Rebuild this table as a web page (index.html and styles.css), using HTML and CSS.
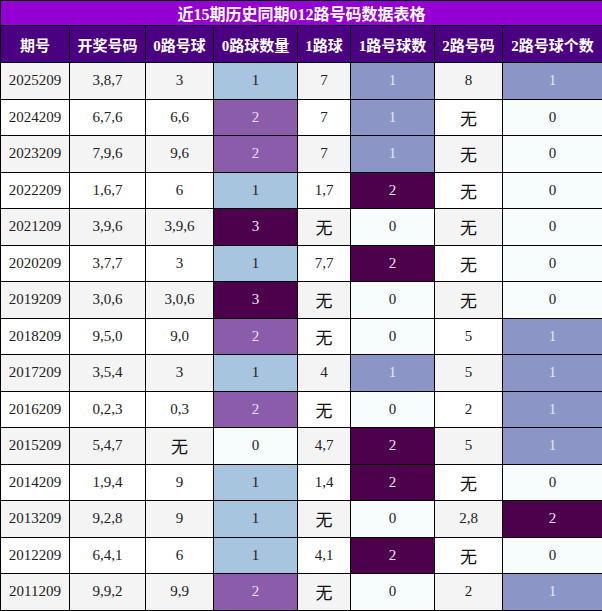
FILE: index.html
```html
<!DOCTYPE html>
<html lang="zh">
<head>
<meta charset="utf-8">
<title>近15期历史同期012路号码数据表格</title>
<link rel="stylesheet" href="styles.css">
</head>
<body>
<table class="data">
<colgroup>
<col class="c1"><col class="c2"><col class="c3"><col class="c4"><col class="c5"><col class="c6"><col class="c7"><col class="c8">
</colgroup>
<thead>
<tr class="title"><th colspan="8">近15期历史同期012路号码数据表格</th></tr>
<tr class="head"><th>期号</th><th>开奖号码</th><th>0路号球</th><th>0路球数量</th><th>1路球</th><th>1路号球数</th><th>2路号码</th><th>2路号球个数</th></tr>
</thead>
<tbody>
<tr class="alt"><td>2025209</td><td>3,8,7</td><td>3</td><td class="lb">1</td><td>7</td><td class="pw">1</td><td>8</td><td class="pw">1</td></tr>
<tr><td>2024209</td><td>6,7,6</td><td>6,6</td><td class="pu">2</td><td>7</td><td class="pw">1</td><td class="cj">无</td><td class="nw">0</td></tr>
<tr class="alt"><td>2023209</td><td>7,9,6</td><td>9,6</td><td class="pu">2</td><td>7</td><td class="pw">1</td><td class="cj">无</td><td class="nw">0</td></tr>
<tr><td>2022209</td><td>1,6,7</td><td>6</td><td class="lb">1</td><td>1,7</td><td class="dk">2</td><td class="cj">无</td><td class="nw">0</td></tr>
<tr class="alt"><td>2021209</td><td>3,9,6</td><td>3,9,6</td><td class="dk">3</td><td class="cj">无</td><td class="nw">0</td><td class="cj">无</td><td class="nw">0</td></tr>
<tr><td>2020209</td><td>3,7,7</td><td>3</td><td class="lb">1</td><td>7,7</td><td class="dk">2</td><td class="cj">无</td><td class="nw">0</td></tr>
<tr class="alt"><td>2019209</td><td>3,0,6</td><td>3,0,6</td><td class="dk">3</td><td class="cj">无</td><td class="nw">0</td><td class="cj">无</td><td class="nw">0</td></tr>
<tr><td>2018209</td><td>9,5,0</td><td>9,0</td><td class="pu">2</td><td class="cj">无</td><td class="nw">0</td><td>5</td><td class="pw">1</td></tr>
<tr class="alt"><td>2017209</td><td>3,5,4</td><td>3</td><td class="lb">1</td><td>4</td><td class="pw">1</td><td>5</td><td class="pw">1</td></tr>
<tr><td>2016209</td><td>0,2,3</td><td>0,3</td><td class="pu">2</td><td class="cj">无</td><td class="nw">0</td><td>2</td><td class="pw">1</td></tr>
<tr class="alt"><td>2015209</td><td>5,4,7</td><td class="cj">无</td><td class="nw">0</td><td>4,7</td><td class="dk">2</td><td>5</td><td class="pw">1</td></tr>
<tr><td>2014209</td><td>1,9,4</td><td>9</td><td class="lb">1</td><td>1,4</td><td class="dk">2</td><td class="cj">无</td><td class="nw">0</td></tr>
<tr class="alt"><td>2013209</td><td>9,2,8</td><td>9</td><td class="lb">1</td><td class="cj">无</td><td class="nw">0</td><td>2,8</td><td class="dk">2</td></tr>
<tr><td>2012209</td><td>6,4,1</td><td>6</td><td class="lb">1</td><td>4,1</td><td class="dk">2</td><td class="cj">无</td><td class="nw">0</td></tr>
<tr class="alt"><td>2011209</td><td>9,9,2</td><td>9,9</td><td class="pu">2</td><td class="cj">无</td><td class="nw">0</td><td>2</td><td class="pw">1</td></tr>
</tbody>
</table>
</body>
</html>
```
FILE: styles.css
```css
html, body {
  margin: 0;
  padding: 0;
  background: #ffffff;
}
.data {
  width: 602px;
  border-collapse: collapse;
  table-layout: fixed;
  font-family: "Liberation Serif", "Noto Sans CJK SC", serif;
  font-size: 15px;
  color: #222;
}
.c1 { width: 69px; }
.c2 { width: 76px; }
.c3 { width: 68px; }
.c4 { width: 84px; }
.c5 { width: 53px; }
.c6 { width: 84px; }
.c7 { width: 68px; }
.c8 { width: 100px; }
.data th, .data td {
  border: 1px solid #000;
  text-align: center;
  padding: 0;
  overflow: hidden;
  white-space: nowrap;
}
.title th {
  background: #9400d3;
  color: #fff;
  font-size: 16px;
  font-weight: bold;
  height: 24px;
}
.head th {
  background: #4b0082;
  color: #fff;
  font-size: 15px;
  font-weight: bold;
  height: 36px;
}
.data tbody tr { height: 36.5px; background: #ffffff; }
.data tbody tr.alt { background: #f4f4f4; }
.data td.cj { font-size: 17px; font-family: "Noto Sans CJK SC", sans-serif; color: #111; }
.data td.lb { background: #a8c5e0; color: #222; }
.data td.pu { background: #8b5ca9; color: #e8e0f0; }
.data td.pw { background: #8c96c6; color: #e4e6f2; }
.data td.dk { background: #4d004b; color: #f0e6f0; }
.data td.nw { background: #f7fcfd; color: #222; }
```
